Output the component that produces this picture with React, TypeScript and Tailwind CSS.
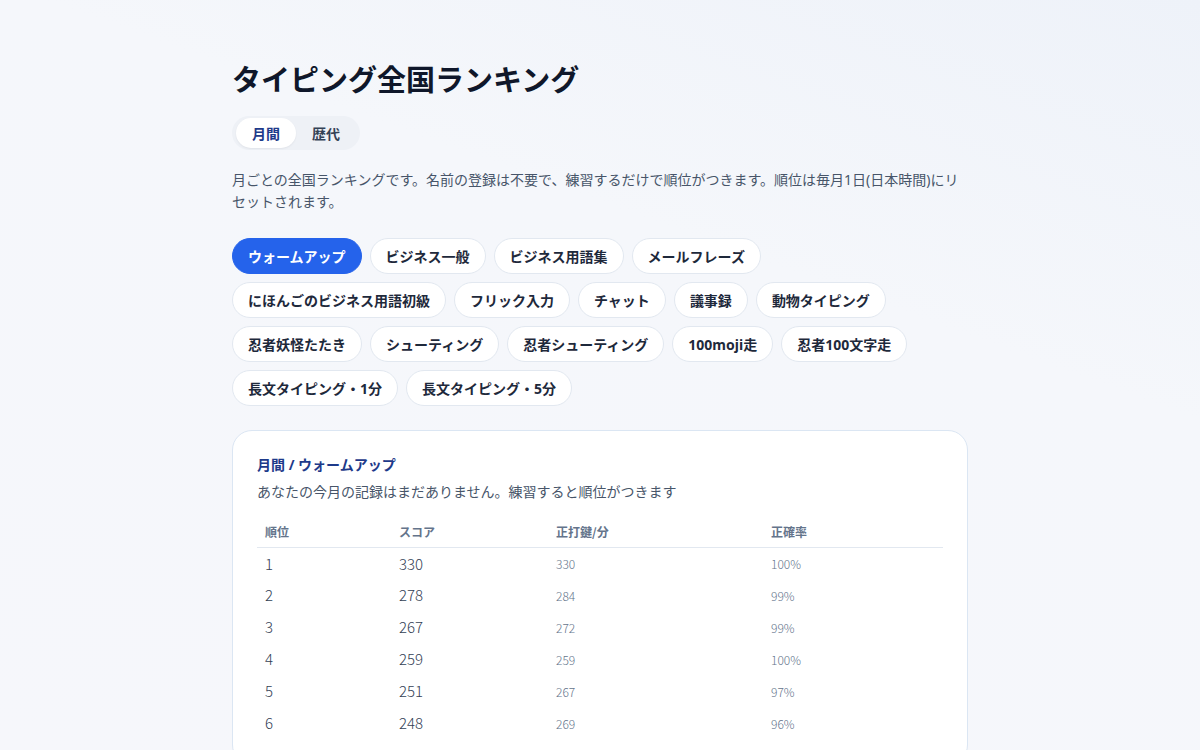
const categories = [
  "ウォームアップ",
  "ビジネス一般",
  "ビジネス用語集",
  "メールフレーズ",
  "にほんごのビジネス用語初級",
  "フリック入力",
  "チャット",
  "議事録",
  "動物タイピング",
  "忍者妖怪たたき",
  "シューティング",
  "忍者シューティング",
  "100moji走",
  "忍者100文字走",
  "長文タイピング・1分",
  "長文タイピング・5分",
];

const rows = [
  { rank: 1, score: 330, kpm: 330, acc: "100%" },
  { rank: 2, score: 278, kpm: 284, acc: "99%" },
  { rank: 3, score: 267, kpm: 272, acc: "99%" },
  { rank: 4, score: 259, kpm: 259, acc: "100%" },
  { rank: 5, score: 251, kpm: 267, acc: "97%" },
  { rank: 6, score: 248, kpm: 269, acc: "96%" },
];

export default function App() {
  return (
    <div
      className="min-h-screen bg-[linear-gradient(200deg,#eef2f9_0%,#f5f7fb_35%,#f6f7fb_100%)] text-slate-800"
      style={{ fontFamily: '"Noto Sans", "Noto Sans CJK JP", sans-serif' }}
    >
      <div className="mx-auto w-[736px] pt-[58px]">
        <h1 className="text-[29px] font-bold leading-[44px] text-[#0f172a]">
          タイピング全国ランキング
        </h1>

        <div className="mt-[14px] inline-flex rounded-full bg-[#eef1f6] px-[4px] py-[2px]">
          <button className="h-[30px] rounded-full bg-white px-[16px] text-[14px] font-bold text-[#1e3a8a] shadow-[0_1px_2px_rgba(15,23,42,0.06)]">
            月間
          </button>
          <button className="h-[30px] rounded-full px-[16px] text-[14px] font-bold text-[#334155]">
            歴代
          </button>
        </div>

        <p className="mt-[19px] text-[14px] leading-[22px] text-[#475569]">
          月ごとの全国ランキングです。名前の登録は不要で、練習するだけで順位がつきます。順位は毎月1日(日本時間)にリセットされます。
        </p>

        <div className="mt-[25px] flex flex-wrap gap-[8px]">
          {categories.map((c, i) => (
            <button
              key={c}
              className={
                i === 0
                  ? "h-[36px] rounded-full border border-[#2563eb] bg-[#2563eb] px-[15px] text-[14px] font-bold text-white"
                  : "h-[36px] rounded-full border border-[#e2e8f0] bg-white px-[15px] text-[14px] font-bold text-[#1e293b]"
              }
            >
              {c}
            </button>
          ))}
        </div>

        <div className="mt-[24px] rounded-[20px] border border-[#dbe6f3] bg-white px-[24px] pb-[24px] pt-[24px]">
          <h2 className="text-[14px] font-bold leading-[20px] text-[#1e3a8a]">月間 / ウォームアップ</h2>
          <p className="mt-[7px] text-[14px] leading-[20px] text-[#475569]">
            あなたの今月の記録はまだありません。練習すると順位がつきます
          </p>
          <table
            className="mt-[21px] w-full border-collapse"
            style={{ fontFamily: '"Noto Sans CJK JP", "Noto Sans", sans-serif' }}
          >
            <thead>
              <tr className="border-b border-[#e2e8f0] text-left text-[12px] font-bold text-[#64748b]">
                <th className="w-[134px] px-[8px] pb-[6px] font-bold">順位</th>
                <th className="w-[157px] px-[8px] pb-[6px] font-bold">スコア</th>
                <th className="w-[215px] px-[8px] pb-[6px] font-bold">正打鍵/分</th>
                <th className="px-[8px] pb-[6px] font-bold">正確率</th>
              </tr>
            </thead>
            <tbody>
              {rows.map((r) => (
                <tr key={r.rank} className="h-[32px]">
                  <td className="px-[8px] text-[15px] font-light text-[#334155]">{r.rank}</td>
                  <td className="px-[8px] text-[15px] font-light text-[#334155]">{r.score}</td>
                  <td className="px-[8px] text-[12px] font-light text-[#64748b]">{r.kpm}</td>
                  <td className="px-[8px] text-[12px] font-light text-[#64748b]">{r.acc}</td>
                </tr>
              ))}
            </tbody>
          </table>
        </div>
      </div>
    </div>
  );
}
